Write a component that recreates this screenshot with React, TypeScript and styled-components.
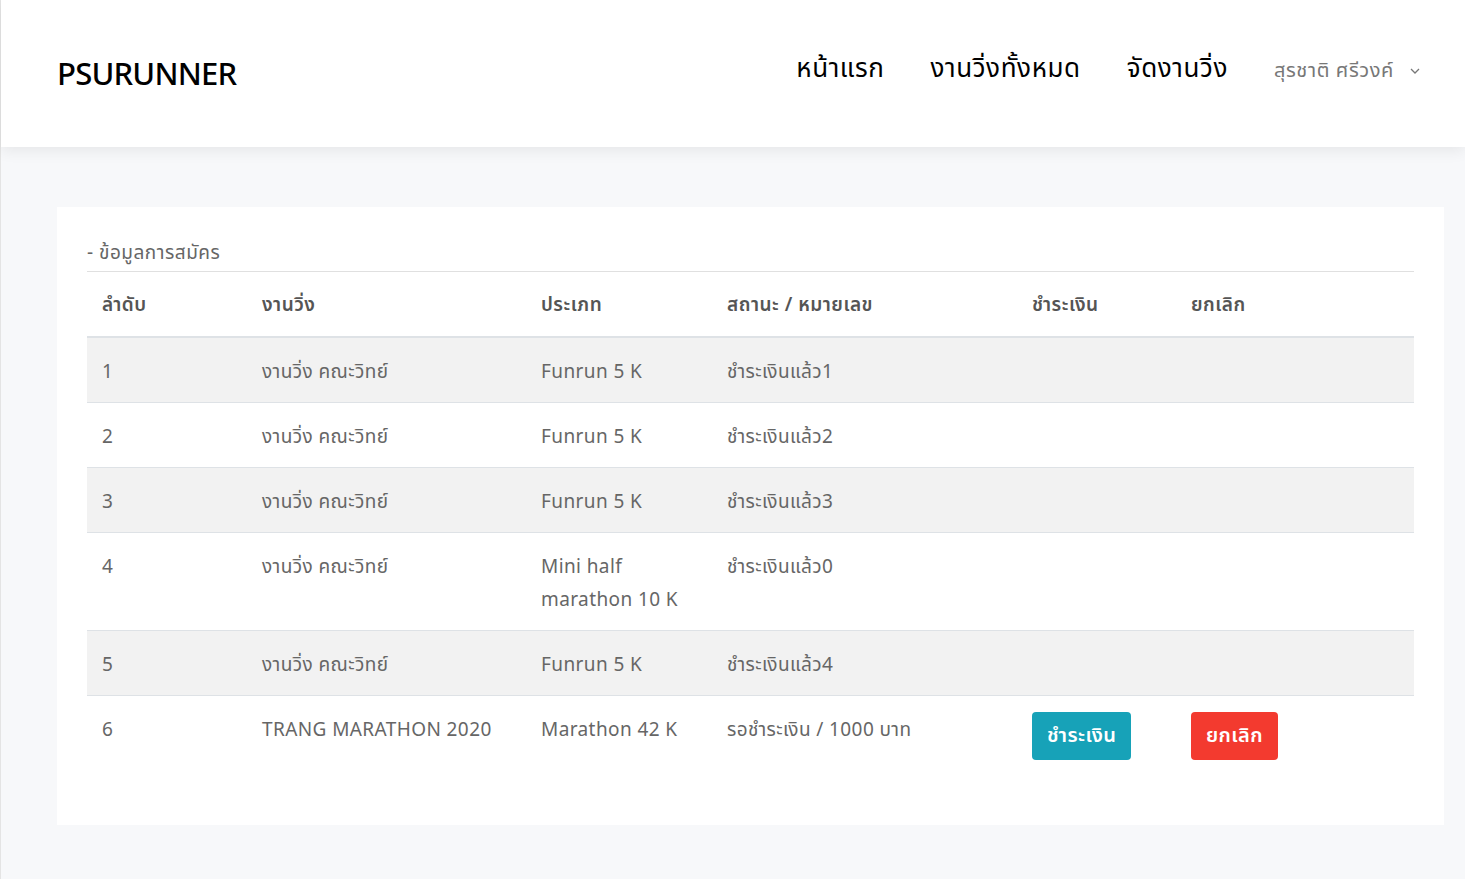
import styled, { createGlobalStyle } from "styled-components";

const GlobalStyle = createGlobalStyle`
  html, body {
    margin: 0;
    padding: 0;
    background: #f7f8fa;
    font-family: "Noto Sans Thai", "Noto Sans", "Liberation Sans", sans-serif;
  }
  * { box-sizing: border-box; }
`;

const Page = styled.div`
  min-height: 879px;
  border-left: 1px solid #e4e4e4;
`;

const Header = styled.header`
  height: 147px;
  background: #fff;
  box-shadow: 0 4px 14px rgba(0, 0, 0, 0.07);
  display: flex;
  align-items: center;
  justify-content: space-between;
  padding: 0 45px 0 56px;
`;

const Logo = styled.div`
  font-size: 31px;
  font-weight: 500;
  color: #000;
  letter-spacing: -0.8px;
  margin-top: 4px;
`;

const Nav = styled.nav`
  display: flex;
  align-items: center;
  gap: 46px;
  margin-top: -10px;
`;

const NavLink = styled.a`
  font-size: 26px;
  letter-spacing: 0.6px;
  color: #000;
  text-decoration: none;
`;

const UserMenu = styled.div`
  display: flex;
  align-items: center;
  gap: 16px;
  font-size: 20px;
  letter-spacing: 0.6px;
  color: #777;
  margin-top: 4px;
`;

const Main = styled.main`
  padding: 60px 21px 40px 56px;
`;

const Card = styled.section`
  background: #fff;
  padding: 30px 30px 52px;
`;

const Title = styled.div`
  font-size: 19px;
  letter-spacing: 0.5px;
  line-height: 34px;
  color: #666;
  border-bottom: 1px solid #e0e0e0;
`;

const Table = styled.table`
  width: 100%;
  border-collapse: collapse;
  table-layout: fixed;
`;

const Th = styled.th<{ $w?: number }>`
  width: ${(p) => (p.$w ? `${p.$w}px` : "auto")};
  text-align: left;
  font-weight: 600;
  font-size: 19px;
  letter-spacing: 0.5px;
  line-height: 31px;
  color: #555;
  padding: 18px 15px 15px;
  border-bottom: 2px solid #dee2e6;
`;

const Row = styled.tr<{ $striped: boolean }>`
  background: ${(p) => (p.$striped ? "#f2f2f2" : "#fff")};
  border-bottom: 1px solid #dee2e6;
  &:last-child {
    border-bottom: none;
    background: #fff;
  }
`;

const Td = styled.td`
  vertical-align: top;
  font-size: 19px;
  letter-spacing: 0.4px;
  line-height: 33px;
  color: #666;
  padding: 18px 15px 13px;
`;

const ActionButton = styled.button<{ $variant: "pay" | "cancel" }>`
  border: none;
  border-radius: 4px;
  height: 48px;
  margin-top: -2px;
  padding: 0 15px;
  font-family: inherit;
  font-size: 20px;
  letter-spacing: 0.4px;
  font-weight: 600;
  color: #fff;
  background: ${(p) => (p.$variant === "pay" ? "#17a2b8" : "#f33a2f")};
  cursor: pointer;
`;

const rows = [
  { no: 1, event: "งานวิ่ง คณะวิทย์", type: "Funrun 5 K", status: "ชำระเงินแล้ว1" },
  { no: 2, event: "งานวิ่ง คณะวิทย์", type: "Funrun 5 K", status: "ชำระเงินแล้ว2" },
  { no: 3, event: "งานวิ่ง คณะวิทย์", type: "Funrun 5 K", status: "ชำระเงินแล้ว3" },
  { no: 4, event: "งานวิ่ง คณะวิทย์", type: "Mini half marathon 10 K", status: "ชำระเงินแล้ว0" },
  { no: 5, event: "งานวิ่ง คณะวิทย์", type: "Funrun 5 K", status: "ชำระเงินแล้ว4" },
  { no: 6, event: "TRANG MARATHON 2020", type: "Marathon 42 K", status: "รอชำระเงิน / 1000 บาท", pending: true },
];

export default function App() {
  return (
    <Page>
      <GlobalStyle />
      <Header>
        <Logo>PSURUNNER</Logo>
        <Nav>
          <NavLink href="#">หน้าแรก</NavLink>
          <NavLink href="#">งานวิ่งทั้งหมด</NavLink>
          <NavLink href="#">จัดงานวิ่ง</NavLink>
          <UserMenu>
            สุรชาติ ศรีวงค์
            <svg width="10" height="6" viewBox="0 0 10 6" fill="none">
              <path d="M1 1l4 4 4-4" stroke="#777" strokeWidth="1.3" />
            </svg>
          </UserMenu>
        </Nav>
      </Header>
      <Main>
        <Card>
          <Title>- ข้อมูลการสมัคร</Title>
          <Table>
            <thead>
              <tr>
                <Th $w={160}>ลำดับ</Th>
                <Th $w={279}>งานวิ่ง</Th>
                <Th $w={186}>ประเภท</Th>
                <Th $w={305}>สถานะ / หมายเลข</Th>
                <Th $w={159}>ชำระเงิน</Th>
                <Th>ยกเลิก</Th>
              </tr>
            </thead>
            <tbody>
              {rows.map((r, i) => (
                <Row key={r.no} $striped={i % 2 === 0}>
                  <Td>{r.no}</Td>
                  <Td>{r.event}</Td>
                  <Td>{r.type}</Td>
                  <Td>{r.status}</Td>
                  <Td>{r.pending && <ActionButton $variant="pay">ชำระเงิน</ActionButton>}</Td>
                  <Td>{r.pending && <ActionButton $variant="cancel">ยกเลิก</ActionButton>}</Td>
                </Row>
              ))}
            </tbody>
          </Table>
        </Card>
      </Main>
    </Page>
  );
}
